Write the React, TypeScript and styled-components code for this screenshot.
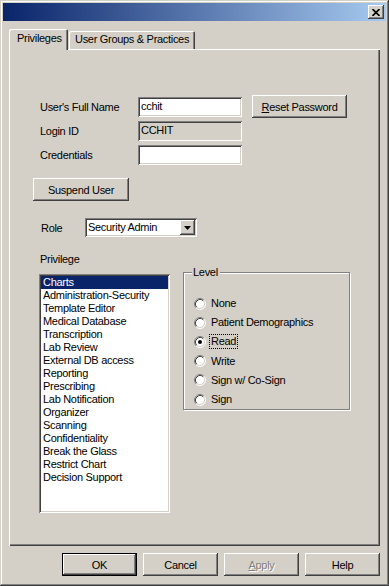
import React from 'react';
import styled, { createGlobalStyle } from 'styled-components';

// Classic Win32 3D edges
const raised = `
  box-shadow: inset -1px -1px #404040, inset 1px 1px #ffffff,
    inset -2px -2px #808080, inset 2px 2px #d4d0c8;
`;
const sunken = `
  box-shadow: inset 1px 1px #808080, inset -1px -1px #ffffff,
    inset 2px 2px #404040, inset -2px -2px #d4d0c8;
`;

const GlobalStyle = createGlobalStyle`
  html, body {
    margin: 0;
    padding: 0;
    background: #d4d0c8;
  }
  body {
    font-family: "Liberation Sans", Arial, sans-serif;
    font-size: 11px;
    letter-spacing: -0.3px;
    color: #000;
  }
  * {
    box-sizing: border-box;
  }
`;

const Window = styled.div`
  width: 389px;
  height: 586px;
  padding: 3px;
  display: flex;
  flex-direction: column;
  background: #d4d0c8;
  box-shadow: inset -1px -1px #404040, inset 1px 1px #d4d0c8,
    inset -2px -2px #808080, inset 2px 2px #ffffff;
`;

const TitleBar = styled.div`
  height: 18px;
  display: flex;
  align-items: center;
  justify-content: flex-end;
  padding-right: 2px;
  background: linear-gradient(90deg, #0a246a 0%, #a6caf0 100%);
`;

const CloseButton = styled.div`
  width: 16px;
  height: 14px;
  display: flex;
  align-items: center;
  justify-content: center;
  background: #d4d0c8;
  ${raised}
`;

const Body = styled.div`
  padding: 0 6px;
  display: flex;
  flex-direction: column;
`;

const TabStrip = styled.div`
  margin-top: 8px;
  height: 20px;
  display: flex;
  align-items: flex-end;
`;

const Tab = styled.div<{ $active?: boolean }>`
  position: relative;
  z-index: ${p => (p.$active ? 1 : 0)};
  height: ${p => (p.$active ? '21px' : '18px')};
  margin-bottom: ${p => (p.$active ? '-1px' : '0')};
  padding: ${p => (p.$active ? '3px 0 0 8px' : '2px 0 0 6px')};
  width: ${p => (p.$active ? '59px' : '126px')};
  margin-left: ${p => (p.$active ? '0' : '1px')};
  background: #d4d0c8;
  border-radius: 2px 2px 0 0;
  box-shadow: inset 1px 1px #ffffff, inset -1px 0 #404040, inset -2px 0 #808080;
  white-space: nowrap;
`;

const Panel = styled.div`
  height: 497px;
  padding: 48px 0 0 24px;
  background: #d4d0c8;
  box-shadow: inset 1px 1px #ffffff, inset -1px -1px #404040, inset -2px -2px #808080;
`;

const FormGrid = styled.div`
  margin-left: 7px;
  display: grid;
  grid-template-columns: 88px 104px 95px;
  grid-template-rows: repeat(3, 20px);
  column-gap: 10px;
  row-gap: 4px;
`;

const Label = styled.div`
  align-self: center;
  white-space: nowrap;
`;

const TextBox = styled.div<{ $disabled?: boolean }>`
  height: 20px;
  padding: 3px 3px 0;
  background: ${p => (p.$disabled ? '#d4d0c8' : '#ffffff')};
  ${sunken}
`;

const Button = styled.div<{ $w?: number; $default?: boolean; $disabled?: boolean }>`
  width: ${p => p.$w ?? 75}px;
  height: 23px;
  display: flex;
  align-items: center;
  justify-content: center;
  background: #d4d0c8;
  white-space: nowrap;
  color: ${p => (p.$disabled ? '#808080' : '#000')};
  text-shadow: ${p => (p.$disabled ? '1px 1px #ffffff' : 'none')};
  border: ${p => (p.$default ? '1px solid #000' : 'none')};
  ${raised}
`;

const ResetButton = styled(Button)`
  margin-top: -2px;
`;

const SuspendButton = styled(Button)`
  margin-top: 13px;
`;

const RoleRow = styled.div`
  margin-top: 17px;
  margin-left: 8px;
  display: flex;
  align-items: center;
`;

const RoleLabel = styled.div`
  width: 44px;
`;

const Combo = styled.div`
  width: 112px;
  height: 19px;
  padding: 2px;
  display: flex;
  background: #ffffff;
  ${sunken}
`;

const ComboText = styled.div`
  flex: 1;
  padding: 1px 0 0 1px;
`;

const ComboButton = styled.div`
  width: 15px;
  display: flex;
  align-items: center;
  justify-content: center;
  background: #d4d0c8;
  ${raised}
`;

const SectionLabel = styled.div`
  margin: 16px 0 0 7px;
`;

const PrivilegeArea = styled.div`
  margin-top: 7px;
  margin-left: 6px;
  display: flex;
  align-items: flex-start;
`;

const ListBox = styled.div`
  margin-top: 2px;
  width: 131px;
  height: 239px;
  padding: 2px;
  background: #ffffff;
  ${sunken}
`;

const ListItem = styled.div<{ $selected?: boolean }>`
  height: 13px;
  line-height: 13px;
  padding-left: 2px;
  white-space: nowrap;
  background: ${p => (p.$selected ? '#0a246a' : 'transparent')};
  color: ${p => (p.$selected ? '#ffffff' : '#000')};
`;

const GroupBox = styled.div`
  position: relative;
  margin-left: 13px;
  width: 167px;
  height: 138px;
  padding: 21px 0 0 10px;
  border: 1px solid #808080;
  box-shadow: inset 1px 1px #ffffff, 1px 1px #ffffff;
`;

const GroupTitle = styled.div`
  position: absolute;
  top: -7px;
  left: 8px;
  padding: 0 2px 0 1px;
  background: #d4d0c8;
`;

const RadioRow = styled.div`
  height: 19.2px;
  display: flex;
  align-items: center;
  gap: 5px;
`;

const RadioText = styled.span<{ $focused?: boolean }>`
  padding: 0 1px;
  line-height: 13px;
  outline: ${p => (p.$focused ? '1px dotted #000' : 'none')};
  margin-left: -1px;
`;

const ButtonRow = styled.div`
  margin-top: 7px;
  display: flex;
  justify-content: flex-end;
  gap: 6px;
`;

const Radio: React.FC<{ checked?: boolean }> = ({ checked }) => (
  <svg width="12" height="12" viewBox="0 0 12 12">
    <circle cx="6" cy="6" r="5" fill="#ffffff" />
    <path d="M2.11 9.89 A5.5 5.5 0 0 1 9.89 2.11" fill="none" stroke="#808080" />
    <path d="M9.89 2.11 A5.5 5.5 0 0 1 2.11 9.89" fill="none" stroke="#ffffff" />
    <path d="M2.82 9.18 A4.5 4.5 0 0 1 9.18 2.82" fill="none" stroke="#404040" />
    <path d="M9.18 2.82 A4.5 4.5 0 0 1 2.82 9.18" fill="none" stroke="#d4d0c8" />
    {checked && <circle cx="6" cy="6" r="2" fill="#000" />}
  </svg>
);

const privileges = [
  'Charts',
  'Administration-Security',
  'Template Editor',
  'Medical Database',
  'Transcription',
  'Lab Review',
  'External DB access',
  'Reporting',
  'Prescribing',
  'Lab Notification',
  'Organizer',
  'Scanning',
  'Confidentiality',
  'Break the Glass',
  'Restrict Chart',
  'Decision Support',
];

const levels = ['None', 'Patient Demographics', 'Read', 'Write', 'Sign w/ Co-Sign', 'Sign'];

export default function App() {
  const selectedPrivilege = 'Charts';
  const level = 'Read';

  return (
    <>
      <GlobalStyle />
      <Window>
        <TitleBar>
          <CloseButton>
            <svg width="8" height="7" viewBox="0 0 8 7">
              <path d="M0.5 0 L7.5 7 M7.5 0 L0.5 7" stroke="#000" strokeWidth="1.6" />
            </svg>
          </CloseButton>
        </TitleBar>
        <Body>
          <TabStrip>
            <Tab $active>Privileges</Tab>
            <Tab>User Groups &amp; Practices</Tab>
          </TabStrip>
          <Panel>
            <FormGrid>
              <Label>User's Full Name</Label>
              <TextBox>cchit</TextBox>
              <ResetButton $w={95}>
                <span><u>R</u>eset Password</span>
              </ResetButton>
              <Label>Login ID</Label>
              <TextBox $disabled>CCHIT</TextBox>
              <div />
              <Label>Credentials</Label>
              <TextBox />
            </FormGrid>
            <SuspendButton $w={96}>Suspend User</SuspendButton>
            <RoleRow>
              <RoleLabel>Role</RoleLabel>
              <Combo>
                <ComboText>Security Admin</ComboText>
                <ComboButton>
                  <svg width="7" height="4" viewBox="0 0 7 4">
                    <polygon points="0,0 7,0 3.5,4" fill="#000" />
                  </svg>
                </ComboButton>
              </Combo>
            </RoleRow>
            <SectionLabel>Privilege</SectionLabel>
            <PrivilegeArea>
              <ListBox>
                {privileges.map(p => (
                  <ListItem key={p} $selected={p === selectedPrivilege}>
                    {p}
                  </ListItem>
                ))}
              </ListBox>
              <GroupBox>
                <GroupTitle>Level</GroupTitle>
                {levels.map(l => (
                  <RadioRow key={l}>
                    <Radio checked={l === level} />
                    <RadioText $focused={l === level}>{l}</RadioText>
                  </RadioRow>
                ))}
              </GroupBox>
            </PrivilegeArea>
          </Panel>
          <ButtonRow>
            <Button $default>OK</Button>
            <Button>Cancel</Button>
            <Button $disabled>
              <span><u>A</u>pply</span>
            </Button>
            <Button>Help</Button>
          </ButtonRow>
        </Body>
      </Window>
    </>
  );
}
